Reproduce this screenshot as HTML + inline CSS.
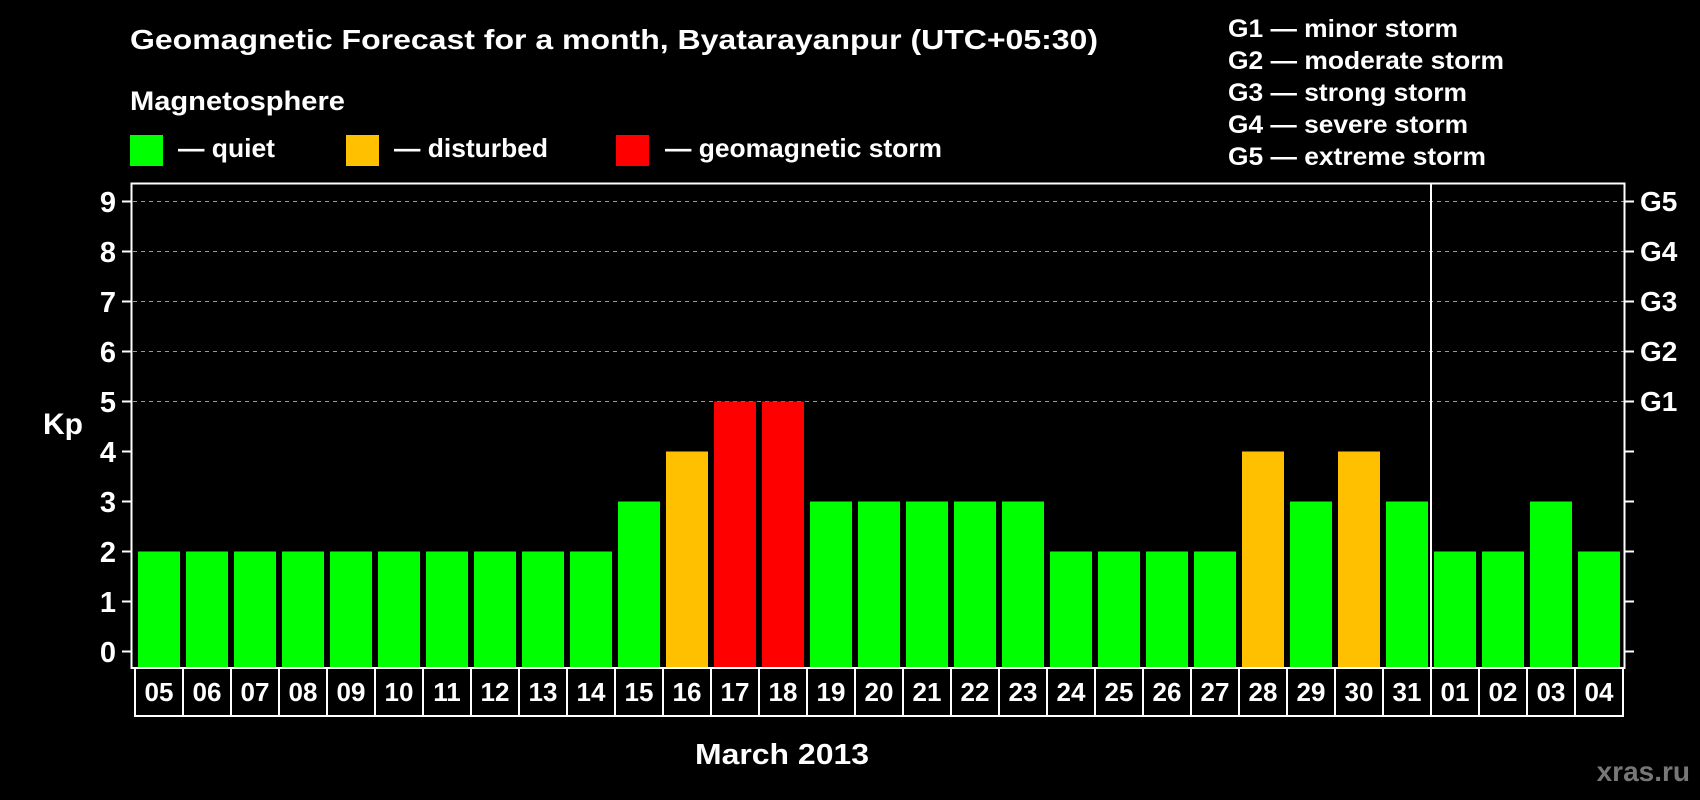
<!DOCTYPE html>
<html><head><meta charset="utf-8"><style>html,body{margin:0;padding:0;background:#000;width:1700px;height:800px;overflow:hidden}
svg text{font-family:"Liberation Sans",Arial,sans-serif;font-weight:bold;fill:#fff}</style></head><body>
<svg width="1700" height="800" xmlns="http://www.w3.org/2000/svg">
<rect width="1700" height="800" fill="#000"/>
<text x="130" y="49" font-size="28" textLength="968" lengthAdjust="spacingAndGlyphs">Geomagnetic Forecast for a month, Byatarayanpur (UTC+05:30)</text>
<text x="130" y="110" font-size="27" textLength="215" lengthAdjust="spacingAndGlyphs">Magnetosphere</text>
<rect x="130" y="135" width="33" height="31" fill="#00ff00"/>
<text x="178" y="157" font-size="26" textLength="97" lengthAdjust="spacingAndGlyphs">— quiet</text>
<rect x="346" y="135" width="33" height="31" fill="#ffc000"/>
<text x="394" y="157" font-size="26" textLength="154" lengthAdjust="spacingAndGlyphs">— disturbed</text>
<rect x="616" y="135" width="33" height="31" fill="#ff0000"/>
<text x="665" y="157" font-size="26" textLength="277" lengthAdjust="spacingAndGlyphs">— geomagnetic storm</text>
<text x="1228" y="37" font-size="25" textLength="230" lengthAdjust="spacingAndGlyphs">G1 — minor storm</text>
<text x="1228" y="69" font-size="25" textLength="276" lengthAdjust="spacingAndGlyphs">G2 — moderate storm</text>
<text x="1228" y="101" font-size="25" textLength="239" lengthAdjust="spacingAndGlyphs">G3 — strong storm</text>
<text x="1228" y="133" font-size="25" textLength="240" lengthAdjust="spacingAndGlyphs">G4 — severe storm</text>
<text x="1228" y="165" font-size="25" textLength="258" lengthAdjust="spacingAndGlyphs">G5 — extreme storm</text>
<g stroke="#999" stroke-width="1" stroke-dasharray="4,4">
<line x1="133" y1="201.5" x2="1624" y2="201.5"/><line x1="133" y1="251.5" x2="1624" y2="251.5"/><line x1="133" y1="301.5" x2="1624" y2="301.5"/><line x1="133" y1="351.5" x2="1624" y2="351.5"/><line x1="133" y1="401.5" x2="1624" y2="401.5"/>
</g>
<g>
<rect x="138" y="551.5" width="42" height="116.5" fill="#00ff00"/>
<rect x="186" y="551.5" width="42" height="116.5" fill="#00ff00"/>
<rect x="234" y="551.5" width="42" height="116.5" fill="#00ff00"/>
<rect x="282" y="551.5" width="42" height="116.5" fill="#00ff00"/>
<rect x="330" y="551.5" width="42" height="116.5" fill="#00ff00"/>
<rect x="378" y="551.5" width="42" height="116.5" fill="#00ff00"/>
<rect x="426" y="551.5" width="42" height="116.5" fill="#00ff00"/>
<rect x="474" y="551.5" width="42" height="116.5" fill="#00ff00"/>
<rect x="522" y="551.5" width="42" height="116.5" fill="#00ff00"/>
<rect x="570" y="551.5" width="42" height="116.5" fill="#00ff00"/>
<rect x="618" y="501.5" width="42" height="166.5" fill="#00ff00"/>
<rect x="666" y="451.5" width="42" height="216.5" fill="#ffc000"/>
<rect x="714" y="401.5" width="42" height="266.5" fill="#ff0000"/>
<rect x="762" y="401.5" width="42" height="266.5" fill="#ff0000"/>
<rect x="810" y="501.5" width="42" height="166.5" fill="#00ff00"/>
<rect x="858" y="501.5" width="42" height="166.5" fill="#00ff00"/>
<rect x="906" y="501.5" width="42" height="166.5" fill="#00ff00"/>
<rect x="954" y="501.5" width="42" height="166.5" fill="#00ff00"/>
<rect x="1002" y="501.5" width="42" height="166.5" fill="#00ff00"/>
<rect x="1050" y="551.5" width="42" height="116.5" fill="#00ff00"/>
<rect x="1098" y="551.5" width="42" height="116.5" fill="#00ff00"/>
<rect x="1146" y="551.5" width="42" height="116.5" fill="#00ff00"/>
<rect x="1194" y="551.5" width="42" height="116.5" fill="#00ff00"/>
<rect x="1242" y="451.5" width="42" height="216.5" fill="#ffc000"/>
<rect x="1290" y="501.5" width="42" height="166.5" fill="#00ff00"/>
<rect x="1338" y="451.5" width="42" height="216.5" fill="#ffc000"/>
<rect x="1386" y="501.5" width="42" height="166.5" fill="#00ff00"/>
<rect x="1434" y="551.5" width="42" height="116.5" fill="#00ff00"/>
<rect x="1482" y="551.5" width="42" height="116.5" fill="#00ff00"/>
<rect x="1530" y="501.5" width="42" height="166.5" fill="#00ff00"/>
<rect x="1578" y="551.5" width="42" height="116.5" fill="#00ff00"/>
</g>
<rect x="131.5" y="183.5" width="1493" height="484.5" fill="none" stroke="#fff" stroke-width="2"/>
<line x1="1431" y1="183" x2="1431" y2="668" stroke="#fff" stroke-width="2"/>
<g stroke="#fff" stroke-width="2">
<path d="M122 201.5h9M122 251.5h9M122 301.5h9M122 351.5h9M122 401.5h9M122 451.5h9M122 501.5h9M122 551.5h9M122 601.5h9M122 651.5h9"/>
<path d="M1625 201.5h9M1625 251.5h9M1625 301.5h9M1625 351.5h9M1625 401.5h9M1625 451.5h9M1625 501.5h9M1625 551.5h9M1625 601.5h9M1625 651.5h9"/>
<path d="M183 668v48M231 668v48M279 668v48M327 668v48M375 668v48M423 668v48M471 668v48M519 668v48M567 668v48M615 668v48M663 668v48M711 668v48M759 668v48M807 668v48M855 668v48M903 668v48M951 668v48M999 668v48M1047 668v48M1095 668v48M1143 668v48M1191 668v48M1239 668v48M1287 668v48M1335 668v48M1383 668v48M1431 668v48M1479 668v48M1527 668v48M1575 668v48"/>
</g>
<rect x="135" y="668" width="1488" height="48" fill="none" stroke="#fff" stroke-width="2"/>
<g font-size="29" text-anchor="end">
<text x="116" y="212">9</text><text x="116" y="262">8</text><text x="116" y="312">7</text><text x="116" y="362">6</text><text x="116" y="412">5</text><text x="116" y="462">4</text><text x="116" y="512">3</text><text x="116" y="562">2</text><text x="116" y="612">1</text><text x="116" y="662">0</text>
</g>
<g font-size="28">
<text x="1640" y="211">G5</text><text x="1640" y="261">G4</text><text x="1640" y="311">G3</text><text x="1640" y="361">G2</text><text x="1640" y="411">G1</text>
</g>
<text x="43" y="434" font-size="30">Kp</text>
<g font-size="26" text-anchor="middle">
<text x="159" y="701">05</text><text x="207" y="701">06</text><text x="255" y="701">07</text><text x="303" y="701">08</text><text x="351" y="701">09</text><text x="399" y="701">10</text><text x="447" y="701">11</text><text x="495" y="701">12</text><text x="543" y="701">13</text><text x="591" y="701">14</text><text x="639" y="701">15</text><text x="687" y="701">16</text><text x="735" y="701">17</text><text x="783" y="701">18</text><text x="831" y="701">19</text><text x="879" y="701">20</text><text x="927" y="701">21</text><text x="975" y="701">22</text><text x="1023" y="701">23</text><text x="1071" y="701">24</text><text x="1119" y="701">25</text><text x="1167" y="701">26</text><text x="1215" y="701">27</text><text x="1263" y="701">28</text><text x="1311" y="701">29</text><text x="1359" y="701">30</text><text x="1407" y="701">31</text><text x="1455" y="701">01</text><text x="1503" y="701">02</text><text x="1551" y="701">03</text><text x="1599" y="701">04</text>
</g>
<text x="782" y="764" font-size="29" text-anchor="middle" textLength="174" lengthAdjust="spacingAndGlyphs">March 2013</text>
<text x="1690" y="781" font-size="28" text-anchor="end" style="fill:#777">xras.ru</text>
</svg>
</body></html>
